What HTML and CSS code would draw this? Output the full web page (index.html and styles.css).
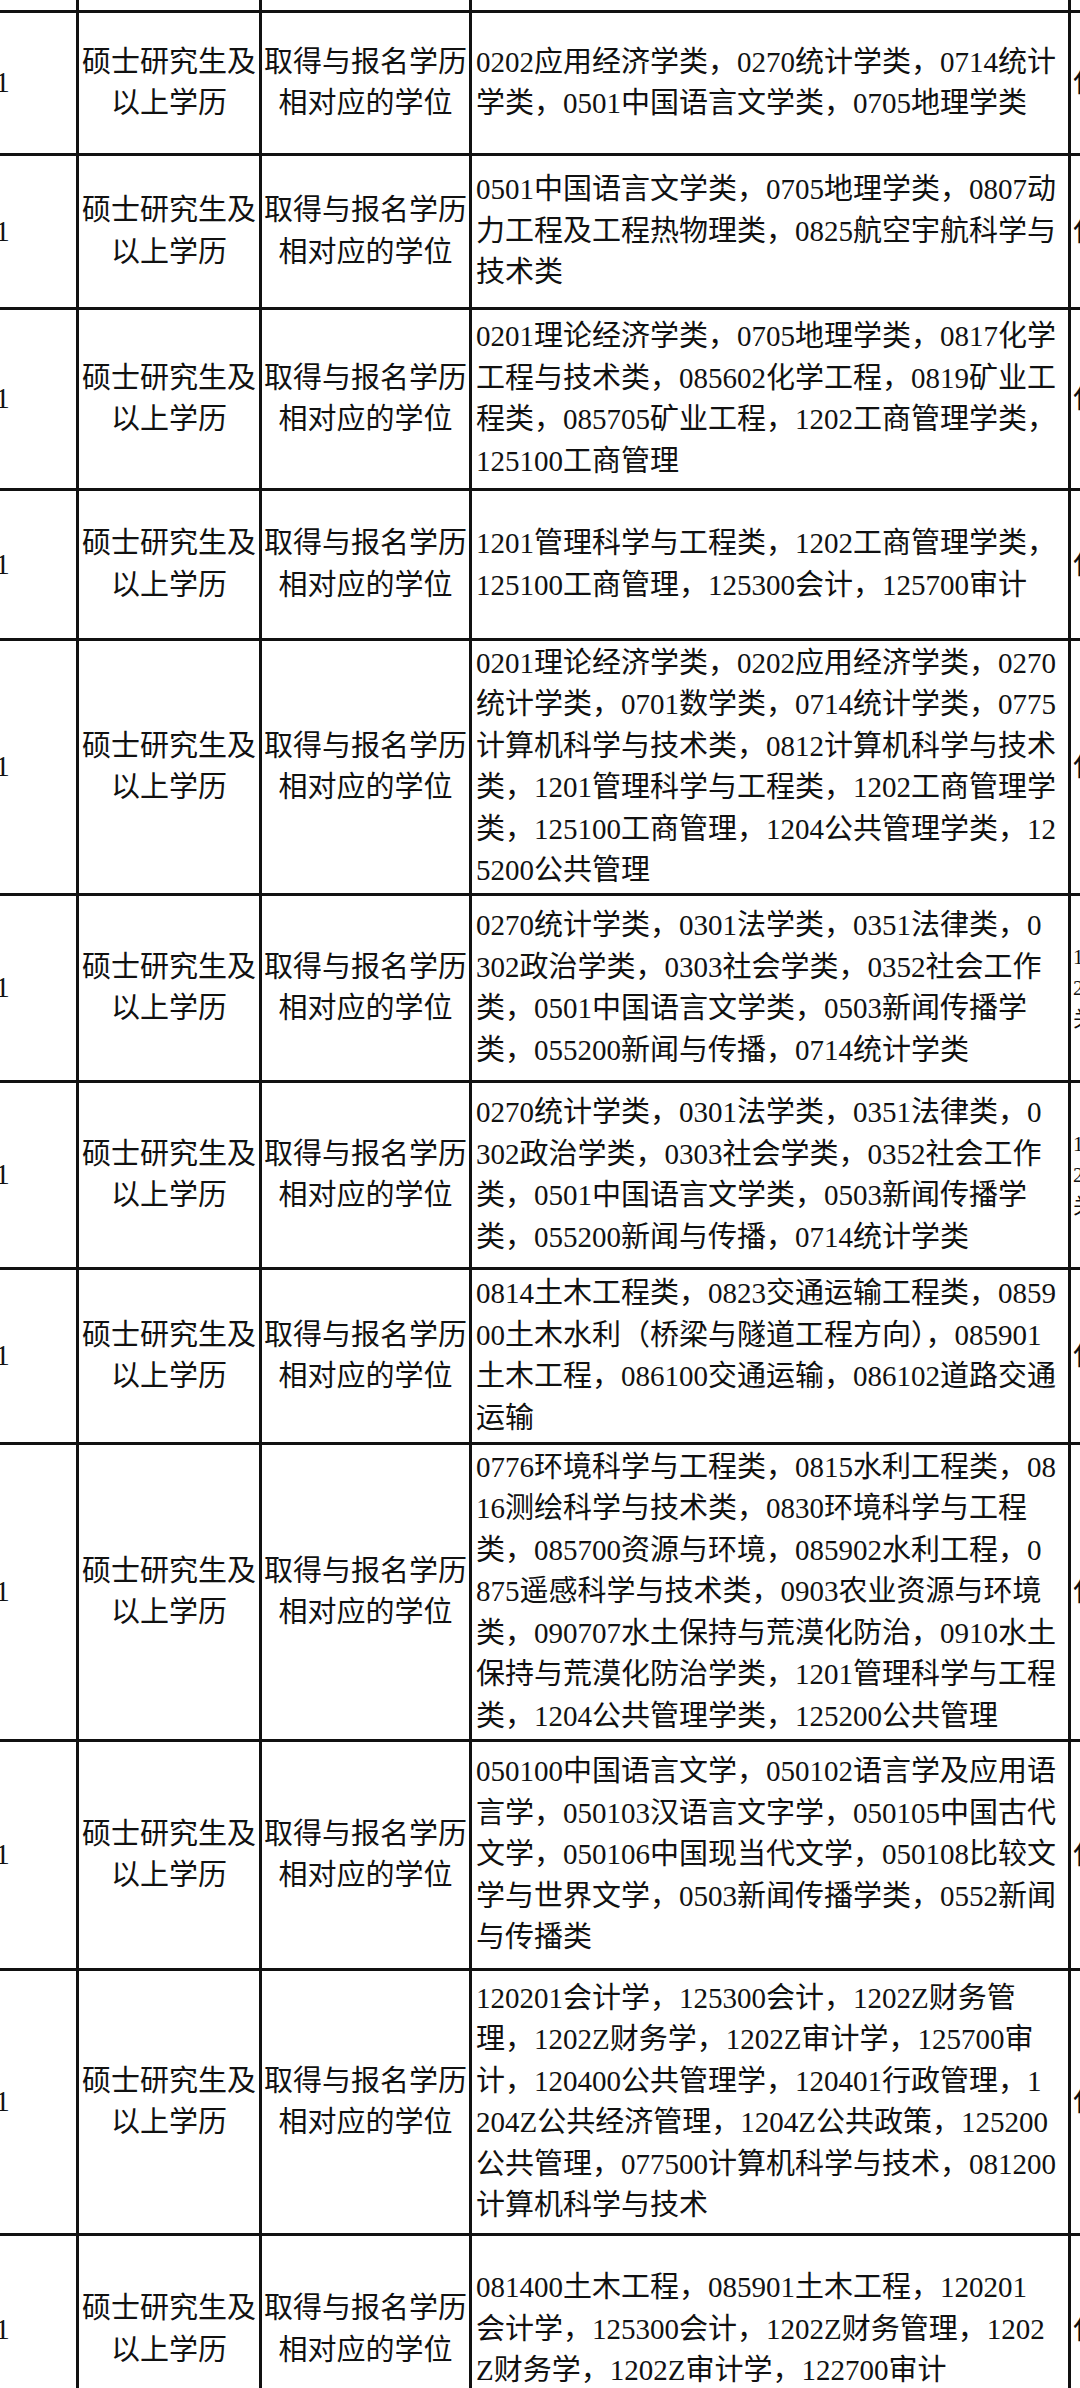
FILE: index.html
```html
<!DOCTYPE html>
<html lang="zh-CN">
<head>
<meta charset="utf-8">
<title>岗位表</title>
<link rel="stylesheet" href="styles.css">
</head>
<body>
<table class="sheet">
  <colgroup>
    <col class="c-num">
    <col class="c-edu">
    <col class="c-deg">
    <col class="c-major">
    <col class="c-note">
  </colgroup>
  <tbody>
    <tr class="stub"><td></td><td></td><td></td><td></td><td></td></tr>
    <tr>
      <td class="num">1</td>
      <td class="ctr">硕士研究生及<br>以上学历</td>
      <td class="ctr">取得与报名学历<br>相对应的学位</td>
      <td class="major">0202应用经济学类，0270统计学类，0714统计<br>学类，0501中国语言文学类，0705地理学类</td>
      <td class="note">仅限</td>
    </tr>
    <tr>
      <td class="num">1</td>
      <td class="ctr">硕士研究生及<br>以上学历</td>
      <td class="ctr">取得与报名学历<br>相对应的学位</td>
      <td class="major">0501中国语言文学类，0705地理学类，0807动<br>力工程及工程热物理类，0825航空宇航科学与<br>技术类</td>
      <td class="note">仅限</td>
    </tr>
    <tr>
      <td class="num">1</td>
      <td class="ctr">硕士研究生及<br>以上学历</td>
      <td class="ctr">取得与报名学历<br>相对应的学位</td>
      <td class="major">0201理论经济学类，0705地理学类，0817化学<br>工程与技术类，085602化学工程，0819矿业工<br>程类，085705矿业工程，1202工商管理学类，<br>125100工商管理</td>
      <td class="note">仅限</td>
    </tr>
    <tr>
      <td class="num">1</td>
      <td class="ctr">硕士研究生及<br>以上学历</td>
      <td class="ctr">取得与报名学历<br>相对应的学位</td>
      <td class="major">1201管理科学与工程类，1202工商管理学类，<br>125100工商管理，125300会计，125700审计</td>
      <td class="note">仅限</td>
    </tr>
    <tr>
      <td class="num">1</td>
      <td class="ctr">硕士研究生及<br>以上学历</td>
      <td class="ctr">取得与报名学历<br>相对应的学位</td>
      <td class="major">0201理论经济学类，0202应用经济学类，0270<br>统计学类，0701数学类，0714统计学类，0775<br>计算机科学与技术类，0812计算机科学与技术<br>类，1201管理科学与工程类，1202工商管理学<br>类，125100工商管理，1204公共管理学类，12<br>5200公共管理</td>
      <td class="note">仅限</td>
    </tr>
    <tr>
      <td class="num">1</td>
      <td class="ctr">硕士研究生及<br>以上学历</td>
      <td class="ctr">取得与报名学历<br>相对应的学位</td>
      <td class="major">0270统计学类，0301法学类，0351法律类，0<br>302政治学类，0303社会学类，0352社会工作<br>类，0501中国语言文学类，0503新闻传播学<br>类，055200新闻与传播，0714统计学类</td>
      <td class="note small">1.<br>2.<br>关</td>
    </tr>
    <tr>
      <td class="num">1</td>
      <td class="ctr">硕士研究生及<br>以上学历</td>
      <td class="ctr">取得与报名学历<br>相对应的学位</td>
      <td class="major">0270统计学类，0301法学类，0351法律类，0<br>302政治学类，0303社会学类，0352社会工作<br>类，0501中国语言文学类，0503新闻传播学<br>类，055200新闻与传播，0714统计学类</td>
      <td class="note small">1.<br>2.<br>关</td>
    </tr>
    <tr>
      <td class="num">1</td>
      <td class="ctr">硕士研究生及<br>以上学历</td>
      <td class="ctr">取得与报名学历<br>相对应的学位</td>
      <td class="major">0814土木工程类，0823交通运输工程类，0859<br>00土木水利（桥梁与隧道工程方向），085901<br>土木工程，086100交通运输，086102道路交通<br>运输</td>
      <td class="note">仅限</td>
    </tr>
    <tr>
      <td class="num">1</td>
      <td class="ctr">硕士研究生及<br>以上学历</td>
      <td class="ctr">取得与报名学历<br>相对应的学位</td>
      <td class="major">0776环境科学与工程类，0815水利工程类，08<br>16测绘科学与技术类，0830环境科学与工程<br>类，085700资源与环境，085902水利工程，0<br>875遥感科学与技术类，0903农业资源与环境<br>类，090707水土保持与荒漠化防治，0910水土<br>保持与荒漠化防治学类，1201管理科学与工程<br>类，1204公共管理学类，125200公共管理</td>
      <td class="note">仅限</td>
    </tr>
    <tr>
      <td class="num">1</td>
      <td class="ctr">硕士研究生及<br>以上学历</td>
      <td class="ctr">取得与报名学历<br>相对应的学位</td>
      <td class="major">050100中国语言文学，050102语言学及应用语<br>言学，050103汉语言文字学，050105中国古代<br>文学，050106中国现当代文学，050108比较文<br>学与世界文学，0503新闻传播学类，0552新闻<br>与传播类</td>
      <td class="note">仅限</td>
    </tr>
    <tr>
      <td class="num">1</td>
      <td class="ctr">硕士研究生及<br>以上学历</td>
      <td class="ctr">取得与报名学历<br>相对应的学位</td>
      <td class="major">120201会计学，125300会计，1202Z财务管<br>理，1202Z财务学，1202Z审计学，125700审<br>计，120400公共管理学，120401行政管理，1<br>204Z公共经济管理，1204Z公共政策，125200<br>公共管理，077500计算机科学与技术，081200<br>计算机科学与技术</td>
      <td class="note">仅限</td>
    </tr>
    <tr>
      <td class="num">1</td>
      <td class="ctr">硕士研究生及<br>以上学历</td>
      <td class="ctr">取得与报名学历<br>相对应的学位</td>
      <td class="major">081400土木工程，085901土木工程，120201<br>会计学，125300会计，1202Z财务管理，1202<br>Z财务学，1202Z审计学，122700审计</td>
      <td class="note">仅限</td>
    </tr>
  </tbody>
</table>
</body>
</html>
```

FILE: styles.css
```css
html, body {
  margin: 0;
  padding: 0;
  background: #ffffff;
}

body {
  width: 1080px;
  height: 2388px;
  overflow: hidden;
  font-family: "Liberation Serif", "Noto Sans CJK SC", serif;
  color: #111111;
}

.sheet {
  border-collapse: collapse;
  table-layout: fixed;
  width: 1442px;
  margin-left: -74px;
  margin-top: -10px;
}

.c-num { width: 150px; }
.c-edu { width: 183px; }
.c-deg { width: 210px; }
.c-major { width: 599px; }
.c-note { width: 300px; }

.sheet td {
  border: 3px solid #111111;
  padding: 0;
  vertical-align: middle;
  font-size: 29px;
  line-height: 41.5px;
  white-space: nowrap;
  overflow: hidden;
}

.sheet .num { text-align: center; }
.sheet .ctr { text-align: center; }
.sheet .major { text-align: left; padding-left: 4px; }
.sheet .note { text-align: left; padding-left: 2px; }
.sheet .note.small { font-size: 21px; line-height: 31px; }

.sheet tr.stub { height: 20px; }
.sheet tbody tr:nth-child(2) { height: 143px; }
.sheet tbody tr:nth-child(3) { height: 154px; }
.sheet tbody tr:nth-child(4) { height: 181px; }
.sheet tbody tr:nth-child(5) { height: 150px; }
.sheet tbody tr:nth-child(6) { height: 255px; }
.sheet tbody tr:nth-child(7) { height: 187px; }
.sheet tbody tr:nth-child(8) { height: 187px; }
.sheet tbody tr:nth-child(9) { height: 175px; }
.sheet tbody tr:nth-child(10) { height: 297px; }
.sheet tbody tr:nth-child(11) { height: 229px; }
.sheet tbody tr:nth-child(12) { height: 265px; }
.sheet tbody tr:nth-child(13) { height: 190px; }
```
